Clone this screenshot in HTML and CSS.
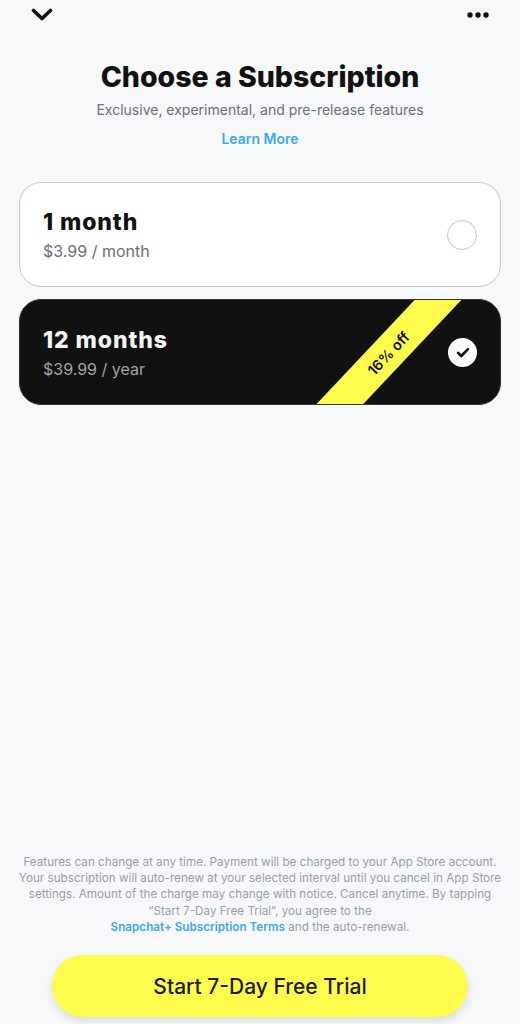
FILE: index.html
```html
<!DOCTYPE html>
<html lang="en">
<head>
<meta charset="utf-8">
<title>Choose a Subscription</title>
<link rel="stylesheet" href="styles.css">
</head>
<body>
<div class="page">
  <header class="topbar">
    <svg class="chev" width="22" height="13" viewBox="0 0 22 13"><path d="M2.5 2.5 L11 10.5 L19.5 2.5" fill="none" stroke="#111" stroke-width="3.6" stroke-linecap="round" stroke-linejoin="round"/></svg>
    <svg class="dots" width="22" height="6" viewBox="0 0 22 6"><circle cx="3" cy="3" r="2.7" fill="#111"/><circle cx="11" cy="3" r="2.7" fill="#111"/><circle cx="19" cy="3" r="2.7" fill="#111"/></svg>
  </header>
  <main class="main">
    <h1 class="title">Choose a Subscription</h1>
    <p class="subtitle">Exclusive, experimental, and pre-release features</p>
    <a class="learn">Learn More</a>
    <div class="plans">
      <div class="plan">
        <div class="plan-text">
          <div class="plan-name">1 month</div>
          <div class="plan-price">$3.99 / month</div>
        </div>
        <span class="radio"></span>
      </div>
      <div class="plan plan-selected">
        <div class="plan-text">
          <div class="plan-name">12 months</div>
          <div class="plan-price">$39.99 / year</div>
        </div>
        <div class="ribbon"><span>16% off</span></div>
        <span class="check"><svg width="16" height="13" viewBox="0 0 16 13"><path d="M3 6.8 L6.3 10 L13 3.2" fill="none" stroke="#111" stroke-width="2.6" stroke-linecap="round" stroke-linejoin="round"/></svg></span>
      </div>
    </div>
  </main>
  <footer class="footer">
    <p class="legal">Features can change at any time. Payment will be charged to your App Store account.<br>Your subscription will auto-renew at your selected interval until you cancel in App Store<br>settings. Amount of the charge may change with notice. Cancel anytime. By tapping<br>“Start 7-Day Free Trial”, you agree to the<br><a class="terms">Snapchat+ Subscription Terms</a> and the auto-renewal.</p>
    <button class="cta">Start 7-Day Free Trial</button>
  </footer>
</div>
</body>
</html>
```

FILE: styles.css
```css
* { box-sizing: border-box; }
html, body { margin: 0; padding: 0; }
body {
  background: #f7f8fa;
  font-family: "Inter", "Noto Sans", sans-serif;
  color: #111;
}
.page {
  height: 1024px;
  display: flex;
  flex-direction: column;
}
.topbar {
  height: 30px;
  display: flex;
  justify-content: space-between;
  align-items: flex-start;
  padding: 0 31px 0 31px;
}
.chev { margin-top: 8px; }
.dots { margin-top: 12px; }
.main {
  flex: 1;
  display: flex;
  flex-direction: column;
  align-items: center;
}
.title {
  margin: 30px 0 0;
  font-size: 28.5px;
  line-height: 34px;
  font-weight: 800;
  letter-spacing: 0;
  color: #111;
}
.subtitle {
  margin: 7px 0 0;
  font-size: 14px;
  line-height: 18px;
  color: #6b6f78;
}
.learn {
  margin-top: 11px;
  font-size: 14px;
  line-height: 18px;
  font-weight: 600;
  color: #3ea6f2;
}
.plans {
  align-self: stretch;
  margin: 34px 19px 0;
  display: flex;
  flex-direction: column;
  gap: 12px;
}
.plan {
  position: relative;
  height: 105px;
  border-radius: 22px;
  background: #fff;
  border: 1px solid #c6c9cf;
  display: flex;
  align-items: center;
  justify-content: space-between;
  padding: 0 23px 0 23px;
  overflow: hidden;
}
.plan-selected {
  height: 106px;
  background: #111;
  border-color: #333;
}
.plan-text { display: flex; flex-direction: column; gap: 5px; }
.plan-name {
  font-size: 23px;
  line-height: 28px;
  font-weight: 800;
  letter-spacing: 0.9px;
  color: #111;
}
.plan-price {
  font-size: 16px;
  line-height: 20px;
  color: #6b6f78;
}
.plan-selected .plan-name { color: #f4f4f4; }
.plan-selected .plan-price { color: #a3a3a3; }
.radio {
  width: 30px;
  height: 30px;
  border-radius: 50%;
  border: 1.5px solid #c3c6cc;
}
.check {
  position: relative;
  z-index: 1;
  width: 29px;
  height: 29px;
  border-radius: 50%;
  background: #fff;
  display: flex;
  align-items: center;
  justify-content: center;
}
.ribbon {
  position: absolute;
  left: 268px;
  top: 36px;
  width: 200px;
  height: 34px;
  background: #fdfb4c;
  transform: rotate(-46.7deg);
  display: flex;
  align-items: center;
  justify-content: center;
}
.ribbon span {
  font-size: 14.5px;
  font-weight: 600;
  color: #111;
}
.footer {
  display: flex;
  flex-direction: column;
  align-items: center;
  padding-bottom: 7px;
}
.legal {
  margin: 0 0 20px;
  text-align: center;
  font-size: 11.7px;
  line-height: 16.25px;
  color: #9a9ea6;
  white-space: nowrap;
}
.terms {
  color: #3ea6f2;
  font-weight: 600;
}
.cta {
  width: 416px;
  height: 62px;
  border: none;
  border-radius: 31px;
  background: #fdfb4c;
  font-family: "Inter", "Noto Sans", sans-serif;
  font-size: 21px;
  font-weight: 500;
  color: #1c1c1c;
  box-shadow: 0 4px 10px rgba(0,0,0,0.12);
}
```
